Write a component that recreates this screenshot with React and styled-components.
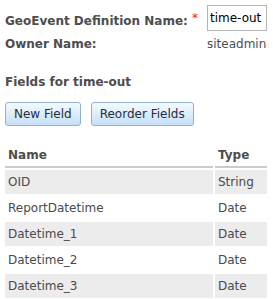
import React from "react";
import styled, { createGlobalStyle } from "styled-components";

const Global = createGlobalStyle`
  html, body { margin: 0; padding: 0; background: #fff; }
  body { font-family: "DejaVu Sans", Verdana, sans-serif; font-size: 12px; color: #4a4a4a; }
`;

const Page = styled.div`
  padding: 5px 0 0 5px;
  width: 273px;
  box-sizing: border-box;
`;

const Form = styled.div`
  display: grid;
  grid-template-columns: 202px auto;
`;

const Label = styled.div`
  font-weight: bold;
  color: #4d4d4d;
  line-height: ${(p) => p.$lh}px;
  white-space: nowrap;
`;

const Value = styled.div`
  line-height: ${(p) => p.$lh}px;
  color: #4d4d4d;
`;

const Required = styled.span`
  color: #e8202a;
  font-weight: normal;
  font-size: 12px;
  margin-left: 4px;
  vertical-align: 3px;
`;

const Input = styled.input`
  box-sizing: border-box;
  width: 60px;
  height: 26px;
  border: 1px solid #b5b5b5;
  padding: 0 2px;
  font-family: "DejaVu Sans", Verdana, sans-serif;
  font-size: 12px;
  color: #000;
  outline: none;
`;

const Heading = styled.div`
  margin-top: 19px;
  font-weight: bold;
  color: #4d4d4d;
  line-height: 16px;
`;

const Toolbar = styled.div`
  display: flex;
  gap: 10px;
  margin-top: 12px;
`;

const Button = styled.button`
  height: 24px;
  padding: 0 8px;
  border: 1px solid #90b1d2;
  border-radius: 3px;
  background: linear-gradient(#f5faff, #c6dff6);
  font-family: "DejaVu Sans", Verdana, sans-serif;
  font-size: 12px;
  color: #1f2d3d;
  cursor: pointer;
`;

const Table = styled.table`
  margin: 16px 0 0 -2px;
  width: 266px;
  border-collapse: separate;
  border-spacing: 2px;
`;

const Th = styled.th`
  text-align: left;
  font-weight: bold;
  color: #4d4d4d;
  padding: 0 3px;
  line-height: 22px;
  border-bottom: 2px solid #cccccc;
  width: ${(p) => p.$w || "auto"};
`;

const Row = styled.tr`
  background: ${(p) => (p.$alt ? "#ececec" : "#fff")};
`;

const Td = styled.td`
  padding: 0 3px;
  line-height: 24px;
  color: #4a4a4a;
  white-space: nowrap;
`;

const fields = [
  ["OID", "String"],
  ["ReportDatetime", "Date"],
  ["Datetime_1", "Date"],
  ["Datetime_2", "Date"],
  ["Datetime_3", "Date"],
];

export default function App() {
  return (
    <Page>
      <Global />
      <Form>
        <Label $lh={26}>
          GeoEvent Definition Name:<Required>*</Required>
        </Label>
        <Input defaultValue="time-out" />
        <Label $lh={21}>Owner Name:</Label>
        <Value $lh={21}>siteadmin</Value>
      </Form>
      <Heading>Fields for time-out</Heading>
      <Toolbar>
        <Button>New Field</Button>
        <Button>Reorder Fields</Button>
      </Toolbar>
      <Table>
        <thead>
          <tr>
            <Th $w="202px">Name</Th>
            <Th>Type</Th>
          </tr>
        </thead>
        <tbody>
          {fields.map(([n, t], i) => (
            <Row key={n} $alt={i % 2 === 0}>
              <Td>{n}</Td>
              <Td>{t}</Td>
            </Row>
          ))}
        </tbody>
      </Table>
    </Page>
  );
}
